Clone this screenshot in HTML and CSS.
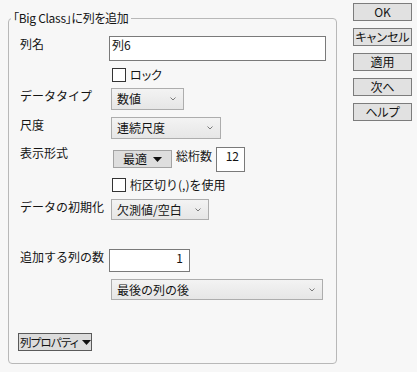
FILE: index.html
```html
<!DOCTYPE html>
<html lang="ja">
<head>
<meta charset="utf-8">
<link rel="stylesheet" href="styles.css">
</head>
<body>
<div class="dialog">
  <fieldset class="panel">
    <legend class="legend">「Big Class」に列を追加</legend>

    <div class="row r-name">
      <span class="label">列名</span>
      <div class="textbox name">列6</div>
    </div>

    <div class="row r-lock">
      <span class="check"></span><span class="check-label kana">ロック</span>
    </div>

    <div class="row r-type">
      <span class="label">データタイプ</span>
      <div class="select w-type"><span>数値</span><svg class="chev" width="6" height="4" viewBox="0 0 6 4"><polyline points="0.5,0.5 3,3 5.5,0.5" fill="none" stroke="#7a7a7a" stroke-width="1"/></svg></div>
    </div>

    <div class="row r-scale">
      <span class="label">尺度</span>
      <div class="select w-scale"><span>連続尺度</span><svg class="chev" width="6" height="4" viewBox="0 0 6 4"><polyline points="0.5,0.5 3,3 5.5,0.5" fill="none" stroke="#7a7a7a" stroke-width="1"/></svg></div>
    </div>

    <div class="row r-format">
      <span class="label label-up">表示形式</span>
      <div class="menubtn best">最適<svg class="tri" width="9" height="5" viewBox="0 0 9 5"><polygon points="0,0 9,0 4.5,5" fill="#111"/></svg></div>
      <span class="digits-label">総桁数</span>
      <div class="textbox digits">12</div>
    </div>

    <div class="row r-sep">
      <span class="check"></span><span class="check-label">桁区切り(,)を使用</span>
    </div>

    <div class="row r-init">
      <span class="label">データの初期化</span>
      <div class="select w-init"><span>欠測値/空白</span><svg class="chev" width="6" height="4" viewBox="0 0 6 4"><polyline points="0.5,0.5 3,3 5.5,0.5" fill="none" stroke="#7a7a7a" stroke-width="1"/></svg></div>
    </div>

    <div class="row r-count">
      <span class="label">追加する列の数</span>
      <div class="textbox count">1</div>
    </div>

    <div class="row r-pos">
      <div class="select w-pos"><span>最後の列の後</span><svg class="chev" width="6" height="4" viewBox="0 0 6 4"><polyline points="0.5,0.5 3,3 5.5,0.5" fill="none" stroke="#7a7a7a" stroke-width="1"/></svg></div>
    </div>

    <div class="row r-prop">
      <div class="propbtn"><span class="prop-text">列プロパティ</span><svg class="tri" width="9" height="5" viewBox="0 0 9 5"><polygon points="0,0 9,0 4.5,5" fill="#111"/></svg></div>
    </div>
  </fieldset>

  <div class="buttons">
    <div class="btn">OK</div>
    <div class="btn kana">キャンセル</div>
    <div class="btn">適用</div>
    <div class="btn kana">次へ</div>
    <div class="btn kana">ヘルプ</div>
  </div>
</div>
</body>
</html>
```

FILE: styles.css
```css
html, body {
  margin: 0;
  padding: 0;
}

body {
  background: #f7f7f7;
  font-family: "Noto Sans CJK JP", "Noto Sans", sans-serif;
  font-size: 12px;
  line-height: 16px;
  color: #141414;
}

.kana {
  font-feature-settings: "palt";
}

.dialog {
  display: flex;
  align-items: flex-start;
  padding-left: 8px;
}

.panel {
  margin: 10px 0 0 0;
  width: 329px;
  box-sizing: border-box;
  border: 1px solid #b8b8b8;
  border-radius: 4px;
  padding: 10px 0 12px 11px;
  min-inline-size: 0;
}

.legend {
  font-feature-settings: "palt";
  letter-spacing: -0.3px;
  line-height: 16px;
  padding: 0 2px;
  margin-left: -9px;
}

.row {
  display: flex;
  align-items: flex-start;
  white-space: nowrap;
}

.label {
  width: 89px;
  flex: none;
}

.label-up {
  margin-top: -2px;
}

/* text boxes */
.textbox {
  box-sizing: border-box;
  background: #fff;
  border: 1px solid #7a7a7a;
  line-height: 16px;
}

.name {
  width: 217px;
  height: 25px;
  padding: 0 2px;
}

.digits {
  width: 29px;
  height: 25px;
  text-align: right;
  padding-right: 5px;
  margin-left: 4px;
}

.count {
  width: 81px;
  height: 23px;
  text-align: right;
  padding-right: 6px;
}

/* checkboxes */
.check {
  box-sizing: border-box;
  width: 14px;
  height: 14px;
  background: #fff;
  border: 1px solid #333;
  margin-left: 92px;
  flex: none;
}

.check-label {
  margin-left: 4px;
  line-height: 14px;
}

/* dropdowns */
.select {
  box-sizing: border-box;
  display: flex;
  align-items: center;
  justify-content: space-between;
  margin-left: 2px;
  padding: 0 7px 0 5px;
  border: 1px solid #adadad;
  background: linear-gradient(#f3f3f3, #e6e6e6);
}

.chev {
  display: block;
  flex: none;
}

.w-type { width: 73px; height: 22px; }
.w-scale { width: 110px; height: 22px; }
.w-init { width: 98px; height: 21px; }
.w-pos { width: 212px; height: 21px; margin-left: 91px; }

/* menu buttons */
.menubtn {
  box-sizing: border-box;
  display: flex;
  align-items: center;
  justify-content: center;
  gap: 6px;
  background: #dedede;
  border: 1px solid #a3a3a3;
}

.best {
  width: 59px;
  height: 18px;
  margin-top: 3px;
  margin-left: 4px;
}

.tri {
  display: block;
  flex: none;
}

.digits-label {
  margin-left: 4px;
  margin-top: 1px;
}

.propbtn {
  box-sizing: border-box;
  display: flex;
  align-items: center;
  gap: 4px;
  width: 74px;
  height: 18px;
  margin-left: -2px;
  padding-left: 1px;
  background: #dcdcdc;
  border: 1px solid #5a5a5a;
  white-space: nowrap;
}

.prop-text {
  font-size: 11.5px;
  font-feature-settings: "palt";
  letter-spacing: -0.8px;
}

/* row spacing */
.r-name { height: 25px; }
.r-lock { margin-top: 7px; height: 14px; }
.r-type { margin-top: 6px; }
.r-scale { margin-top: 7px; }
.r-format { margin-top: 8px; }
.r-sep { margin-top: 6px; height: 14px; }
.r-init { margin-top: 7px; }
.r-count { margin-top: 29px; }
.r-pos { margin-top: 7px; }
.r-prop { margin-top: 33px; }

/* right-hand buttons */
.buttons {
  display: flex;
  flex-direction: column;
  gap: 7px;
  margin-left: 16px;
  margin-top: 3px;
}

.btn {
  box-sizing: border-box;
  width: 59px;
  height: 18px;
  line-height: 16px;
  text-align: center;
  background: #e1e1e1;
  border: 1px solid #7c7c7c;
}
```
